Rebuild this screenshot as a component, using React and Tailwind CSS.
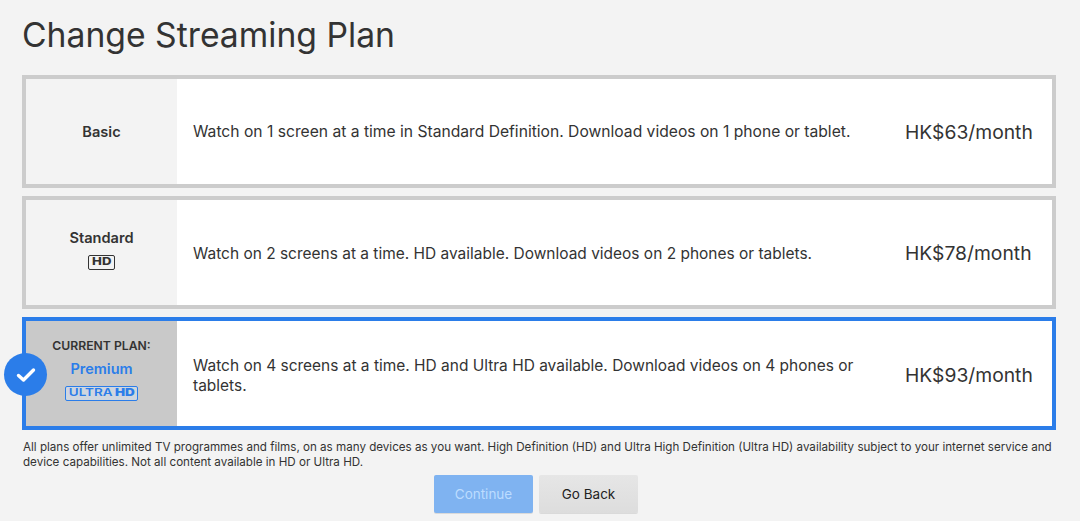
import React from "react";

function Check() {
  return (
    <div className="absolute left-[-22px] top-[32px] flex h-[43px] w-[43px] items-center justify-center rounded-full bg-[#2b7de9]">
      <svg width="20" height="16" viewBox="0 0 20 16" fill="none">
        <path d="M2.5 8.5 L7.5 13 L17.5 3" stroke="#fff" strokeWidth="3.4" strokeLinecap="round" strokeLinejoin="round" />
      </svg>
    </div>
  );
}

function HdBadge() {
  return (
    <div className="mt-[7px] flex h-[15px] w-[27px] items-center justify-center rounded-[2px] border-[1.5px] border-[#333] text-[10.5px] leading-none font-extrabold text-[#333]">
      <span className="scale-x-[1.25]">HD</span>
    </div>
  );
}

function UhdBadge() {
  return (
    <div className="mt-[8px] flex h-[15px] w-[73px] items-center justify-center rounded-[2px] border-[1.5px] border-[#2b7de9] bg-[#d4dfee]/60 text-[10.5px] leading-none font-semibold text-[#2b7de9]">
      <span className="flex scale-x-[1.28] gap-[2px]">
        <span>ULTRA</span>
        <span className="font-black">HD</span>
      </span>
    </div>
  );
}

function Plan({ active, left, text, price, pad, textCls, priceCls }) {
  return (
    <div className={`relative flex h-[113px] border-4 ${active ? "border-[#2b7de9]" : "border-[#cccccc]"} bg-white`}>
      <div className={`flex w-[151px] shrink-0 flex-col items-center justify-center ${pad} ${active ? "bg-[#c9c9c9]" : "bg-[#f3f3f3]"}`}>
        {left}
      </div>
      <div className={`flex min-w-0 flex-1 items-center pl-[16px] leading-[20px] text-[#333] ${textCls}`}>
        <p className="w-[670px]">{text}</p>
      </div>
      <div className={`flex w-[147px] shrink-0 items-center text-[19.3px] text-[#333] ${priceCls}`}>{price}</div>
      {active && <Check />}
    </div>
  );
}

export default function App() {
  return (
    <div className="h-[521px] w-[1080px] overflow-hidden bg-[#f3f3f3] pl-[22px] pr-[24px] pt-[13px] font-['Inter','Liberation_Sans',sans-serif]">
      <h1 className="h-[62px] text-[33.7px] leading-[44px] font-normal text-[#333]">Change Streaming Plan</h1>
      <div className="flex flex-col gap-[8px]">
        <Plan
          pad="pt-[2px]"
          textCls="pt-[1px] text-[15.65px]"
          priceCls="pt-[1px]"
          left={<div className="text-[14.6px] font-semibold text-[#333]">Basic</div>}
          text="Watch on 1 screen at a time in Standard Definition. Download videos on 1 phone or tablet."
          price="HK$63/month"
        />
        <Plan
          pad="pb-[8px]"
          textCls="pt-[3px] text-[15.47px]"
          priceCls="pt-[1px]"
          left={
            <>
              <div className="text-[14.6px] leading-[20px] font-semibold text-[#333]">Standard</div>
              <HdBadge />
            </>
          }
          text="Watch on 2 screens at a time. HD available. Download videos on 2 phones or tablets."
          price="HK$78/month"
        />
        <Plan
          active
          pad="pb-[8px]"
          textCls="pt-[5px] text-[15.47px]"
          priceCls="pt-[3px]"
          left={
            <>
              <div className="text-[12.2px] leading-[16px] font-semibold text-[#333]">CURRENT PLAN:</div>
              <div className="mt-[6px] text-[14.5px] leading-[18px] font-semibold text-[#2b7de9]">Premium</div>
              <UhdBadge />
            </>
          }
          text="Watch on 4 screens at a time. HD and Ultra HD available. Download videos on 4 phones or tablets."
          price="HK$93/month"
        />
      </div>
      <p className="ml-[1px] mt-[10px] text-[11.62px] leading-[15px] text-[#333]">
        All plans offer unlimited TV programmes and films, on as many devices as you want. High Definition (HD) and Ultra High Definition (Ultra HD) availability subject to your internet service and device capabilities. Not all content available in HD or Ultra HD.
      </p>
      <div className="mt-[5px] flex justify-center gap-[6px] pr-[6px]">
        <button className="h-[38px] w-[99px] rounded-[2px] bg-[#7fb3f1] text-[13.5px] text-[#bcdcff] shadow-[0_1px_0_rgba(0,0,0,0.1)]">Continue</button>
        <button className="h-[38px] w-[99px] rounded-[2px] bg-linear-to-b from-[#e6e6e6] to-[#dddddd] text-[13.5px] text-[#222] shadow-[0_1px_0_rgba(0,0,0,0.1)]">Go Back</button>
      </div>
    </div>
  );
}
